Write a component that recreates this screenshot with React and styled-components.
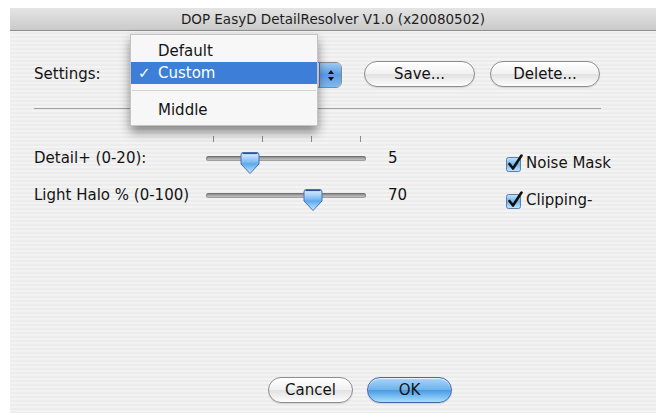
import React from 'react';
import styled, { createGlobalStyle, css } from 'styled-components';

const GlobalStyle = createGlobalStyle`
  html, body {
    margin: 0;
    padding: 0;
    background: #ffffff;
  }
  body {
    font-family: "DejaVu Sans", "Liberation Sans", sans-serif;
    color: #141414;
  }
`;

const stripes = css`
  background: repeating-linear-gradient(
    180deg,
    #ececec 0px,
    #ececec 2px,
    #f3f3f3 2px,
    #f3f3f3 4px
  );
`;

const Window = styled.div`
  margin: 8px 1px 4px 10px;
  width: 646px;
  height: 405px;
  display: flex;
  flex-direction: column;
  ${stripes}
`;

const TitleBar = styled.div`
  height: 22px;
  flex: none;
  display: flex;
  align-items: center;
  justify-content: center;
  font-size: 13.5px;
  color: #1e1e1e;
  background: linear-gradient(180deg, #e4e4e4 0%, #d6d6d6 55%, #cacaca 100%);
  border-bottom: 1px solid #8e8e8e;
`;

const Body = styled.div`
  flex: 1;
  display: flex;
  flex-direction: column;
  padding: 0 0 10px 24px;
  font-size: 15px;
`;

const SettingsRow = styled.div`
  margin-top: 30px;
  height: 26px;
  display: flex;
  align-items: center;
`;

const Label = styled.span`
  width: ${p => p.$width || 'auto'};
  flex: none;
  white-space: nowrap;
`;

const PopupWrap = styled.div`
  position: relative;
  width: 212px;
  height: 26px;
  margin-right: 22px;
`;

const PopupButton = styled.div`
  height: 24px;
  margin-top: 1px;
  display: flex;
  border: 1px solid #8a8a8a;
  border-radius: 6px;
  overflow: hidden;
  background: linear-gradient(180deg, #ffffff, #e6e6e6);
`;

const PopupFace = styled.span`
  flex: 1;
`;

const Stepper = styled.span`
  width: 21px;
  display: flex;
  align-items: center;
  justify-content: center;
  background: linear-gradient(180deg, #9cc9f2 0%, #5b9de3 50%, #7fbaf0 100%);
  border-left: 1px solid #5379b7;
`;

const Menu = styled.div`
  position: absolute;
  left: 0;
  top: -27px;
  width: 186px;
  padding: 5px 0 4px;
  background: #f7f7f7;
  border: 1px solid #c4c4c4;
  box-shadow: 0 6px 10px rgba(0, 0, 0, 0.45);
  z-index: 2;
`;

const MenuItem = styled.div`
  height: 22px;
  display: flex;
  align-items: center;
  padding-left: 27px;
  position: relative;
  color: ${p => (p.$active ? '#ffffff' : '#141414')};
  background: ${p => (p.$active ? '#3d7fd8' : 'transparent')};
`;

const Check = styled.span`
  position: absolute;
  left: 7px;
`;

const MenuSeparator = styled.div`
  height: 1px;
  margin: 6px 1px 8px;
  background: #d4d4d4;
`;

const PillButton = styled.button`
  height: 26px;
  width: ${p => p.$width}px;
  margin-right: ${p => p.$gap || 0}px;
  flex: none;
  padding: 0;
  border-radius: 13px;
  font: inherit;
  font-size: 15px;
  color: #141414;
  border: 1px solid ${p => (p.$primary ? '#4667a8' : '#8d8d8d')};
  background: ${p =>
    p.$primary
      ? 'linear-gradient(180deg, #a9d6f8 0%, #6fb3ec 48%, #4d9be6 52%, #a4e0ff 100%)'
      : 'linear-gradient(180deg, #ffffff 0%, #f1f1f1 48%, #e2e2e2 52%, #fdfdfd 100%)'};
  box-shadow: inset 0 1px 1px rgba(255, 255, 255, 0.8), 0 1px 1px rgba(0, 0, 0, 0.12);
`;

const Separator = styled.div`
  margin-top: 21px;
  width: 567px;
  height: 1px;
  background: #9e9e9e;
`;

const Ticks = styled.div`
  margin-top: 27px;
  height: 6px;
  display: flex;
  gap: 48px;
  padding-left: 179px;
`;

const Tick = styled.span`
  width: 1px;
  height: 6px;
  background: #8c8c8c;
`;

const SliderGrid = styled.div`
  margin-top: 3px;
  display: grid;
  grid-template-columns: 172px 160px 22px 117px auto;
  grid-auto-rows: 26px;
  row-gap: 11px;
  align-items: center;
`;

const Track = styled.div`
  position: relative;
  height: 5px;
  border-radius: 3px;
  background: linear-gradient(180deg, #7b7b7b 0%, #a9a9a9 50%, #d2d2d2 100%);
  box-shadow: inset 0 0 0 1px rgba(80, 80, 80, 0.35);
`;

const Thumb = styled.svg`
  position: absolute;
  top: -5px;
  margin-left: -10px;
`;

const Value = styled.span`
  grid-column: 4;
`;

const CheckCell = styled.label`
  display: flex;
  align-items: center;
  gap: 2px;
  padding-top: 10px;
  white-space: nowrap;
`;

const Spacer = styled.div`
  flex: 1;
`;

const Footer = styled.div`
  display: flex;
  padding-left: 234px;
`;

const Slider = ({ value, max }) => {
  // thumb centre travels 9px..149px across the 160px track
  const left = 9 + (value / max) * 140;
  return (
    <Track>
      <Thumb width="20" height="24" viewBox="0 0 20 24" style={{ left }}>
        <defs>
          <linearGradient id={`thumb-${value}`} x1="0" y1="0" x2="0" y2="1">
            <stop offset="0" stopColor="#e4f2ff" />
            <stop offset="0.45" stopColor="#7fbcf2" />
            <stop offset="0.55" stopColor="#5ea8ec" />
            <stop offset="1" stopColor="#c6ecff" />
          </linearGradient>
        </defs>
        <path
          d="M3 1.5 H17 Q19 1.5 19 4 V13 L10 22.5 L1 13 V4 Q1 1.5 3 1.5 Z"
          fill={`url(#thumb-${value})`}
          stroke="#4a6fb4"
          strokeWidth="1"
        />
        <path d="M2.5 2.5 H17.5" stroke="#2f4f9a" strokeWidth="1.2" />
      </Thumb>
    </Track>
  );
};

const CheckBox = () => (
  <svg width="19" height="19" viewBox="0 0 19 19">
    <defs>
      <linearGradient id="cb" x1="0" y1="0" x2="0" y2="1">
        <stop offset="0" stopColor="#c4e2fb" />
        <stop offset="0.5" stopColor="#72b6ef" />
        <stop offset="1" stopColor="#bfe8ff" />
      </linearGradient>
    </defs>
    <rect x="1.5" y="3.5" width="14" height="14" rx="2" fill="url(#cb)" stroke="#5d7fa8" />
    <path d="M4.5 10 L8 14.5 L16.5 1.5" fill="none" stroke="#111" strokeWidth="2.6" strokeLinecap="round" strokeLinejoin="round" />
  </svg>
);

const App = () => (
  <>
    <GlobalStyle />
    <Window>
      <TitleBar>DOP EasyD DetailResolver V1.0 (x20080502)</TitleBar>
      <Body>
        <SettingsRow>
          <Label $width="96px">Settings:</Label>
          <PopupWrap>
            <PopupButton>
              <PopupFace />
              <Stepper>
                <svg width="8" height="13" viewBox="0 0 8 13">
                  <path d="M4 1 L7 5 H1 Z M4 12 L7 8 H1 Z" fill="#111" />
                </svg>
              </Stepper>
            </PopupButton>
            <Menu>
              <MenuItem>Default</MenuItem>
              <MenuItem $active>
                <Check>✓</Check>
                Custom
              </MenuItem>
              <MenuSeparator />
              <MenuItem>Middle</MenuItem>
            </Menu>
          </PopupWrap>
          <PillButton $width={111} $gap={15}>Save...</PillButton>
          <PillButton $width={110}>Delete...</PillButton>
        </SettingsRow>

        <Separator />

        <Ticks>
          <Tick />
          <Tick />
          <Tick />
          <Tick />
        </Ticks>

        <SliderGrid>
          <Label>Detail+ (0-20):</Label>
          <Slider value={5} max={20} />
          <Value>5</Value>
          <CheckCell>
            <CheckBox />
            Noise Mask
          </CheckCell>

          <Label>Light Halo % (0-100)</Label>
          <Slider value={70} max={100} />
          <Value>70</Value>
          <CheckCell>
            <CheckBox />
            Clipping-
          </CheckCell>
        </SliderGrid>

        <Spacer />

        <Footer>
          <PillButton $width={85} $gap={14}>Cancel</PillButton>
          <PillButton $width={85} $primary>OK</PillButton>
        </Footer>
      </Body>
    </Window>
  </>
);

export default App;
